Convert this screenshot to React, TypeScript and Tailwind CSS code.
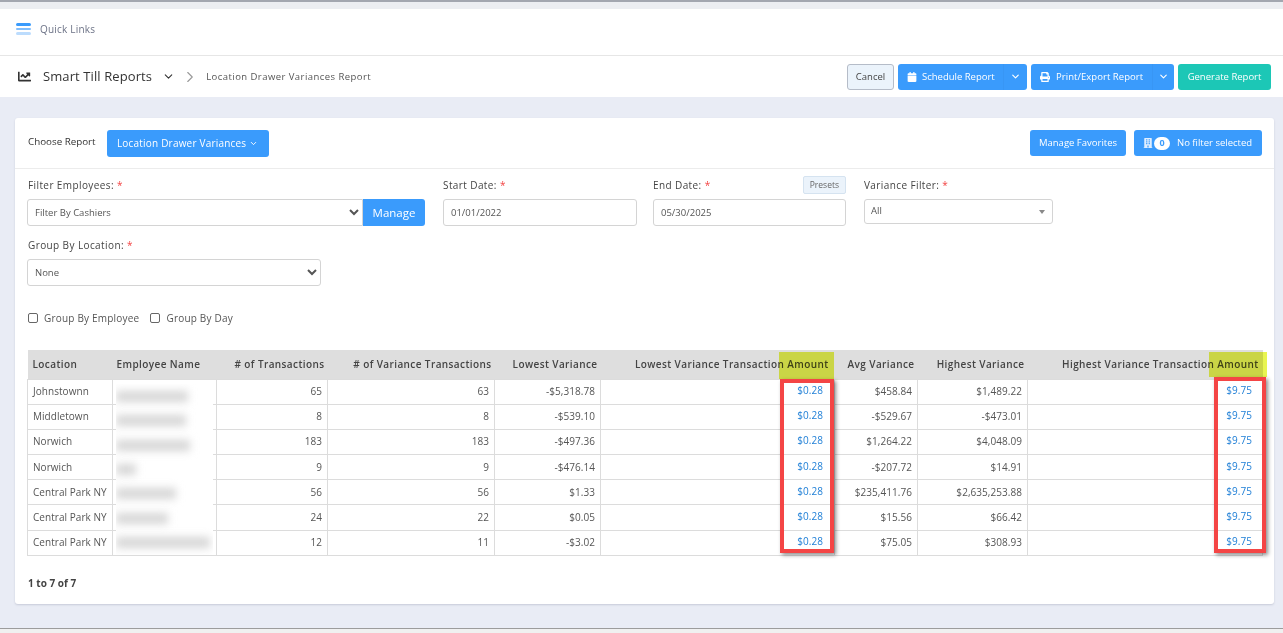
import { ChevronDown, ChevronRight } from 'lucide-react'
import { FaBuilding, FaCalendar, FaChartLine, FaPrint } from 'react-icons/fa'

const rows = [
  ['Johnstownn', '65', '63', '-$5,318.78', '$458.84', '$1,489.22'],
  ['Middletown', '8', '8', '-$539.10', '-$529.67', '-$473.01'],
  ['Norwich', '183', '183', '-$497.36', '$1,264.22', '$4,048.09'],
  ['Norwich', '9', '9', '-$476.14', '-$207.72', '$14.91'],
  ['Central Park NY', '56', '56', '$1.33', '$235,411.76', '$2,635,253.88'],
  ['Central Park NY', '24', '22', '$0.05', '$15.56', '$66.42'],
  ['Central Park NY', '12', '11', '-$3.02', '$75.05', '$308.93'],
]

// width of the blurred name bar per row
const blurWidths = ['w-[72px]', 'w-[70px]', 'w-[74px]', 'w-[20px]', 'w-[60px]', 'w-[52px]', 'w-[94px]']

function Label({ text }: { text: string }) {
  return (
    <label className="block text-[10px] leading-[14px] tracking-[0.4px] text-[#444]">
      {text} <span className="text-[#f34343]">*</span>
    </label>
  )
}

function App() {
  return (
    <div className="flex h-[633px] w-full flex-col overflow-hidden bg-[#e9ecf5] font-['Open_Sans',sans-serif]">
      <div className="h-[2px] bg-[#a3a7b0]" />
      <div className="h-[7px] bg-[#eceef2]" />

      <div className="flex h-[47px] items-center border-b border-[#e6e6e6] bg-white pb-[6px] pl-4">
        <div className="flex w-[15px] flex-col gap-[2px]">
          <div className="h-[2.5px] rounded-sm bg-[#3a9bfc]" />
          <div className="h-[2.5px] rounded-sm bg-[#7fbdfc]" />
          <div className="h-[2.5px] rounded-sm bg-[#bcdcfd]" />
        </div>
        <span className="ml-[9px] text-[10px] tracking-[0.2px] text-[#6c7286]">Quick Links</span>
      </div>

      <div className="flex h-[41px] items-center bg-white pl-[18px] pr-3">
        <FaChartLine className="text-[13px] text-[#333]" />
        <span className="ml-3 text-[13px] tracking-[0.1px] text-[#333]">Smart Till Reports</span>
        <ChevronDown size={13} strokeWidth={2} className="ml-[10px] text-[#333]" />
        <ChevronRight size={18} strokeWidth={1.5} className="ml-[6px] text-[#999]" />
        <span className="ml-[7px] mt-px text-[9.5px] tracking-[0.45px] text-[#555]">Location Drawer Variances Report</span>
        <div className="ml-auto flex items-center gap-1">
          <button className="h-[26px] w-[47px] rounded-[3px] border border-[#b5bcc8] bg-[#ebf3fb] pt-px text-[9.5px] text-[#444]">Cancel</button>
          <div className="flex h-[26px] w-[129px] items-center rounded-[3px] bg-[#3a9bfc] pl-[9px] text-[9.5px] text-white">
            <FaCalendar className="text-[10px]" />
            <span className="ml-[5px] pt-px">Schedule Report</span>
            <span className="ml-auto flex h-full w-[24px] items-center justify-center border-l border-[#3896f5]">
              <ChevronDown size={11} strokeWidth={2.5} />
            </span>
          </div>
          <div className="flex h-[26px] w-[143px] items-center rounded-[3px] bg-[#3a9bfc] pl-[9px] text-[9.5px] text-white">
            <FaPrint className="text-[10px]" />
            <span className="ml-[6px] pt-px tracking-[0.05px]">Print/Export Report</span>
            <span className="ml-auto flex h-full w-[22px] items-center justify-center border-l border-[#3896f5]">
              <ChevronDown size={11} strokeWidth={2.5} />
            </span>
          </div>
          <button className="h-[26px] w-[93px] rounded-[3px] bg-[#1cc7b6] pt-px text-[9.5px] text-white">Generate Report</button>
        </div>
      </div>

      <div className="ml-[15px] mr-[9px] mt-[21px] h-[486px] rounded-[3px] bg-white shadow-[0_1px_2px_rgba(150,155,175,0.4)]">
        <div className="flex h-[51px] items-start border-b border-[#ececec] px-3 pt-3">
          <span className="ml-px mt-[5px] text-[9.8px] text-[#333]">Choose Report</span>
          <div className="ml-[11px] flex h-[27px] w-[162px] items-center justify-center gap-[3px] rounded-[3px] bg-[#3a9bfc] text-[10px] tracking-[0.2px] text-white">
            Location Drawer Variances
            <ChevronDown size={9} strokeWidth={2.5} />
          </div>
          <button className="ml-auto h-[26px] w-[96px] rounded-[3px] bg-[#3a9bfc] text-[9.5px] text-white">Manage Favorites</button>
          <div className="ml-2 mr-0 flex h-[26px] w-[128px] items-center rounded-[3px] bg-[#3a9bfc] pl-[9px] text-[9.5px] text-white">
            <FaBuilding className="text-[10px] text-[#dfeeff]" />
            <span className="ml-px flex h-[13px] w-4 items-center justify-center rounded-full bg-white text-[9px] font-bold text-[#3a9bfc]">0</span>
            <span className="ml-[7px]">No filter selected</span>
          </div>
        </div>

        <div className="flex items-start pl-3 pt-[9px]">
          <div className="w-[398px]">
            <div className="pl-px"><Label text="Filter Employees:" /></div>
            <div className="mt-[7px] flex h-[27px]">
              <select defaultValue="c" className="h-full w-[336px] rounded-l-[3px] border border-[#d4d4d4] bg-white pl-[3px] text-[9.5px] text-[#555]">
                <option value="c">Filter By Cashiers</option>
              </select>
              <button className="h-full w-[62px] rounded-r-[3px] bg-[#3a9bfc] text-[11.5px] text-white">Manage</button>
            </div>
          </div>
          <div className="ml-[18px] w-[194px]">
            <Label text="Start Date:" />
            <input readOnly value="01/01/2022" className="mt-[7px] h-[27px] w-full rounded-[3px] border border-[#d4d4d4] px-[7px] text-[9.5px] text-[#555]" />
          </div>
          <div className="ml-4 w-[193px]">
            <div className="relative">
              <Label text="End Date:" />
              <span className="absolute right-0 top-[-2px] rounded-[2px] border border-[#d5e3f0] bg-[#ebf3fb] px-[6px] py-px text-[8.5px] leading-[14px] text-[#666]">Presets</span>
            </div>
            <input readOnly value="05/30/2025" className="mt-[7px] h-[27px] w-full rounded-[3px] border border-[#d4d4d4] px-[7px] text-[9.5px] text-[#555]" />
          </div>
          <div className="ml-[18px] w-[189px]">
            <Label text="Variance Filter:" />
            <div className="mt-[7px] flex h-[25px] items-center justify-between rounded-[3px] border border-[#d4d4d4] px-[6px] text-[9.5px] text-[#555]">
              All
              <span className="mr-px border-x-[3.5px] border-t-[4px] border-x-transparent border-t-[#888]" />
            </div>
          </div>
        </div>

        <div className="mt-[12px] box-content w-[294px] pl-3">
          <div className="pl-px"><Label text="Group By Location:" /></div>
          <select defaultValue="n" className="mt-[7px] h-[27px] w-full rounded-[3px] border border-[#d4d4d4] bg-white pl-[3px] text-[9.5px] text-[#555]">
            <option value="n">None</option>
          </select>
        </div>

        <div className="ml-[13px] mt-[26px] flex h-[12px] items-center text-[10px] tracking-[0.2px] text-[#555]">
          <span className="h-[10px] w-[10px] rounded-[2px] border border-[#666]" />
          <span className="ml-[6px]">Group By Employee</span>
          <span className="ml-[11px] h-[10px] w-[10px] rounded-[2px] border border-[#666]" />
          <span className="ml-[6px]">Group By Day</span>
        </div>

        <div className="relative ml-[12px] mt-[26px] w-[1235px]">
          <table className="w-full table-fixed border-collapse text-[10px] tracking-[0.05px] text-[#555]">
            <colgroup>
              <col className="w-[85px]" />
              <col className="w-[104px]" />
              <col className="w-[111px]" />
              <col className="w-[167px]" />
              <col className="w-[106px]" />
              <col className="w-[234px]" />
              <col className="w-[83px]" />
              <col className="w-[110px]" />
              <col className="w-[235px]" />
            </colgroup>
            <thead>
              <tr className="h-[29px] bg-[#dedede] text-[10px] tracking-[0.4px] text-[#444]">
                <th className="pl-[5px] pr-1 pt-px text-left font-semibold">Location</th>
                <th className="px-1 pt-px text-left font-semibold">Employee Name</th>
                <th className="px-[3px] pt-px text-right font-semibold"># of Transactions</th>
                <th className="px-[3px] pt-px text-right font-semibold"># of Variance Transactions</th>
                <th className="px-[3px] pt-px text-right font-semibold">Lowest Variance</th>
                <th className="whitespace-nowrap pl-0 pr-[6px] pt-px text-right font-semibold">Lowest Variance Transaction Amount</th>
                <th className="px-[3px] pt-px text-right font-semibold">Avg Variance</th>
                <th className="px-[3px] pt-px text-right font-semibold">Highest Variance</th>
                <th className="whitespace-nowrap pl-0 pr-[4px] pt-px text-right font-semibold">Highest Variance Transaction Amount</th>
              </tr>
            </thead>
            <tbody>
              {rows.map((r, i) => (
                <tr key={i} className="h-[25.2px]">
                  <td className="whitespace-nowrap border border-[#dcdcdc] pl-[5px] pr-1">{r[0]}</td>
                  <td className="border border-[#dcdcdc]" />
                  <td className="border border-[#dcdcdc] px-[5px] text-right">{r[1]}</td>
                  <td className="border border-[#dcdcdc] px-[5px] text-right">{r[2]}</td>
                  <td className="border border-[#dcdcdc] px-[5px] text-right">{r[3]}</td>
                  <td className="border border-[#dcdcdc] pb-[2px] pr-[11px] text-right text-[#1f7fd6]">$0.28</td>
                  <td className="border border-[#dcdcdc] px-[5px] text-right">{r[4]}</td>
                  <td className="border border-[#dcdcdc] px-[5px] text-right">{r[5]}</td>
                  <td className="border border-[#dcdcdc] pb-[2px] pr-[10px] text-right text-[#1f7fd6]">$9.75</td>
                </tr>
              ))}
            </tbody>
          </table>

          {/* blurred out employee names */}
          <div className="absolute left-[89px] top-[34px] flex h-[171px] w-[97px] flex-col overflow-hidden bg-white">
            {blurWidths.map((w, i) => (
              <div key={i} className="flex h-[25px] items-center">
                <div className={`h-[11px] ${w} bg-[#d6d6d6] blur-[4px]`} />
              </div>
            ))}
          </div>

          {/* highlighter + red annotation boxes */}
          <div className="absolute left-[752px] top-[2px] h-[27px] w-[55px] bg-[#e8f550] mix-blend-multiply" />
          <div className="absolute left-[1182px] top-[2px] h-[25px] w-[58px] bg-[#e8f550] mix-blend-multiply" />
          <div className="absolute left-[753px] top-[29px] h-[174px] w-[54px] border-4 border-[#f44545] shadow-[2px_2px_4px_rgba(0,0,0,0.45)]" />
          <div className="absolute left-[1187px] top-[27px] h-[176px] w-[52px] border-4 border-[#f44545] shadow-[2px_2px_4px_rgba(0,0,0,0.45)]" />
        </div>

        <p className="ml-[13px] mt-[20px] text-[10px] font-bold text-[#444]">1 to 7 of 7</p>
      </div>

      <div className="mt-[24px] h-px bg-[#9c9c9c]" />
      <div className="flex-1 bg-[#f0f0f0]" />
    </div>
  )
}

export default App
